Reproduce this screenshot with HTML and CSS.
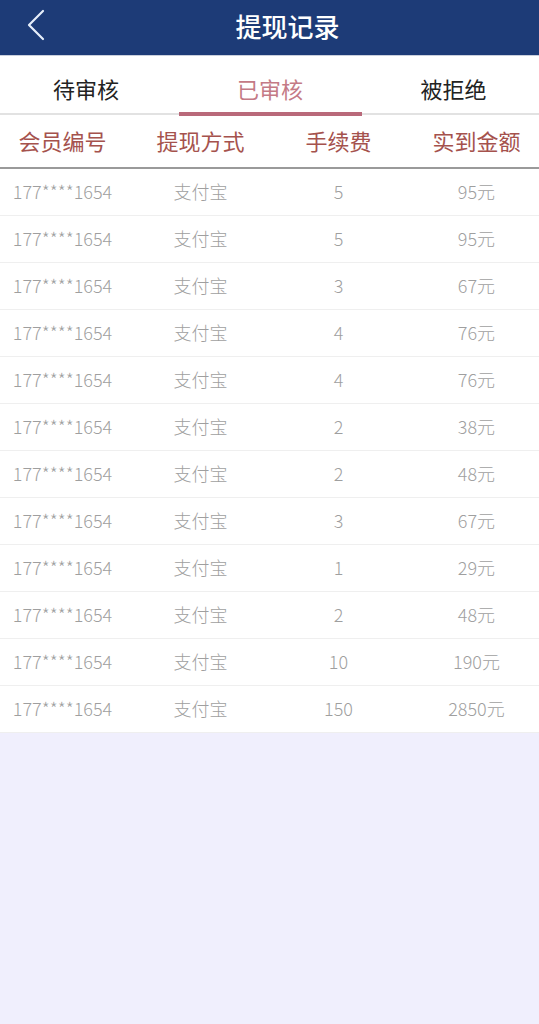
FILE: index.html
```html
<!DOCTYPE html>
<html lang="zh-CN">
<head>
    <meta charset="UTF-8">
    <meta name="viewport" content="width=device-width, initial-scale=1.0">
    <title>提现记录</title>
    <link rel="stylesheet" href="styles.css">
</head>
<body>
    <header class="topbar">
        <a class="voltar" href="#">
            <svg width="20" height="32" viewBox="0 0 20 32"><path d="M17 2 L3 16 L17 30" fill="none" stroke="#e6eefa" stroke-width="2.2" stroke-linecap="round" stroke-linejoin="round"/></svg>
        </a>
        <h1>提现记录</h1>
    </header>

    <nav class="tabs">
        <a href="#" class="tab">待审核</a>
        <a href="#" class="tab ativo">已审核</a>
        <a href="#" class="tab">被拒绝</a>
    </nav>

    <div class="tabela">
        <div class="linha cabecalho">
            <span>会员编号</span>
            <span>提现方式</span>
            <span>手续费</span>
            <span>实到金额</span>
        </div>
        <div id="corpo"></div>
    </div>

    <script>
        // registros da lista (taxa, valor recebido)
        const registros = [
            [5, 95], [5, 95], [3, 67], [4, 76], [4, 76], [2, 38],
            [2, 48], [3, 67], [1, 29], [2, 48], [10, 190], [150, 2850]
        ];

        const corpo = document.querySelector("#corpo");

        registros.forEach((r) => {
            const linha = document.createElement("div");
            linha.className = "linha";
            linha.innerHTML =
                "<span>177****1654</span>" +
                "<span>支付宝</span>" +
                "<span>" + r[0] + "</span>" +
                "<span>" + r[1] + "元</span>";
            corpo.appendChild(linha);
        });
    </script>
</body>
</html>
```

FILE: styles.css
```css
* {
    box-sizing: border-box;
    padding: 0;
    margin: 0;
    font-family: "Noto Sans CJK SC", "Liberation Sans", sans-serif;
}

body {
    background-color: #f0effd;
    width: 539px;
    min-height: 1024px;
}

.topbar {
    height: 56px;
    background-color: #1d3b77;
    display: flex;
    align-items: center;
    justify-content: center;
    position: relative;
    padding-left: 36px;
    padding-bottom: 4px;
    border-bottom: 1px solid #c9cfdc;
}

.topbar h1 {
    color: #ffffff;
    font-size: 26px;
    font-weight: 500;
    line-height: 1;
}

.voltar {
    position: absolute;
    left: 26px;
    top: 9px;
    display: block;
}

.tabs {
    display: grid;
    grid-template-columns: 172px 196px 171px;
    background-color: #ffffff;
    height: 59px;
    border-bottom: 2px solid #e2e2e2;
}

.tab {
    text-align: center;
    font-size: 22px;
    line-height: 1;
    color: #222222;
    text-decoration: none;
    padding-top: 21px;
    position: relative;
}

.tab.ativo {
    color: #c47a86;
}

.tab.ativo::after {
    content: "";
    position: absolute;
    left: 7px;
    right: 6px;
    bottom: -3px;
    height: 4px;
    background-color: #b9697a;
}

.tabela {
    background-color: #ffffff;
}

.linha {
    display: grid;
    grid-template-columns: repeat(4, 123px);
    column-gap: 15px;
    padding-left: 1px;
    padding-bottom: 2px;
    height: 47px;
    align-items: center;
    border-bottom: 1px solid #efefef;
    font-size: 18px;
    font-weight: 300;
    line-height: 1;
    color: #9f9f9f;
}

.linha span {
    text-align: center;
    white-space: nowrap;
}

.linha.cabecalho {
    height: 54px;
    font-size: 22px;
    font-weight: 400;
    color: #a5524d;
    border-bottom: 2px solid #9a9a9a;
}
```
